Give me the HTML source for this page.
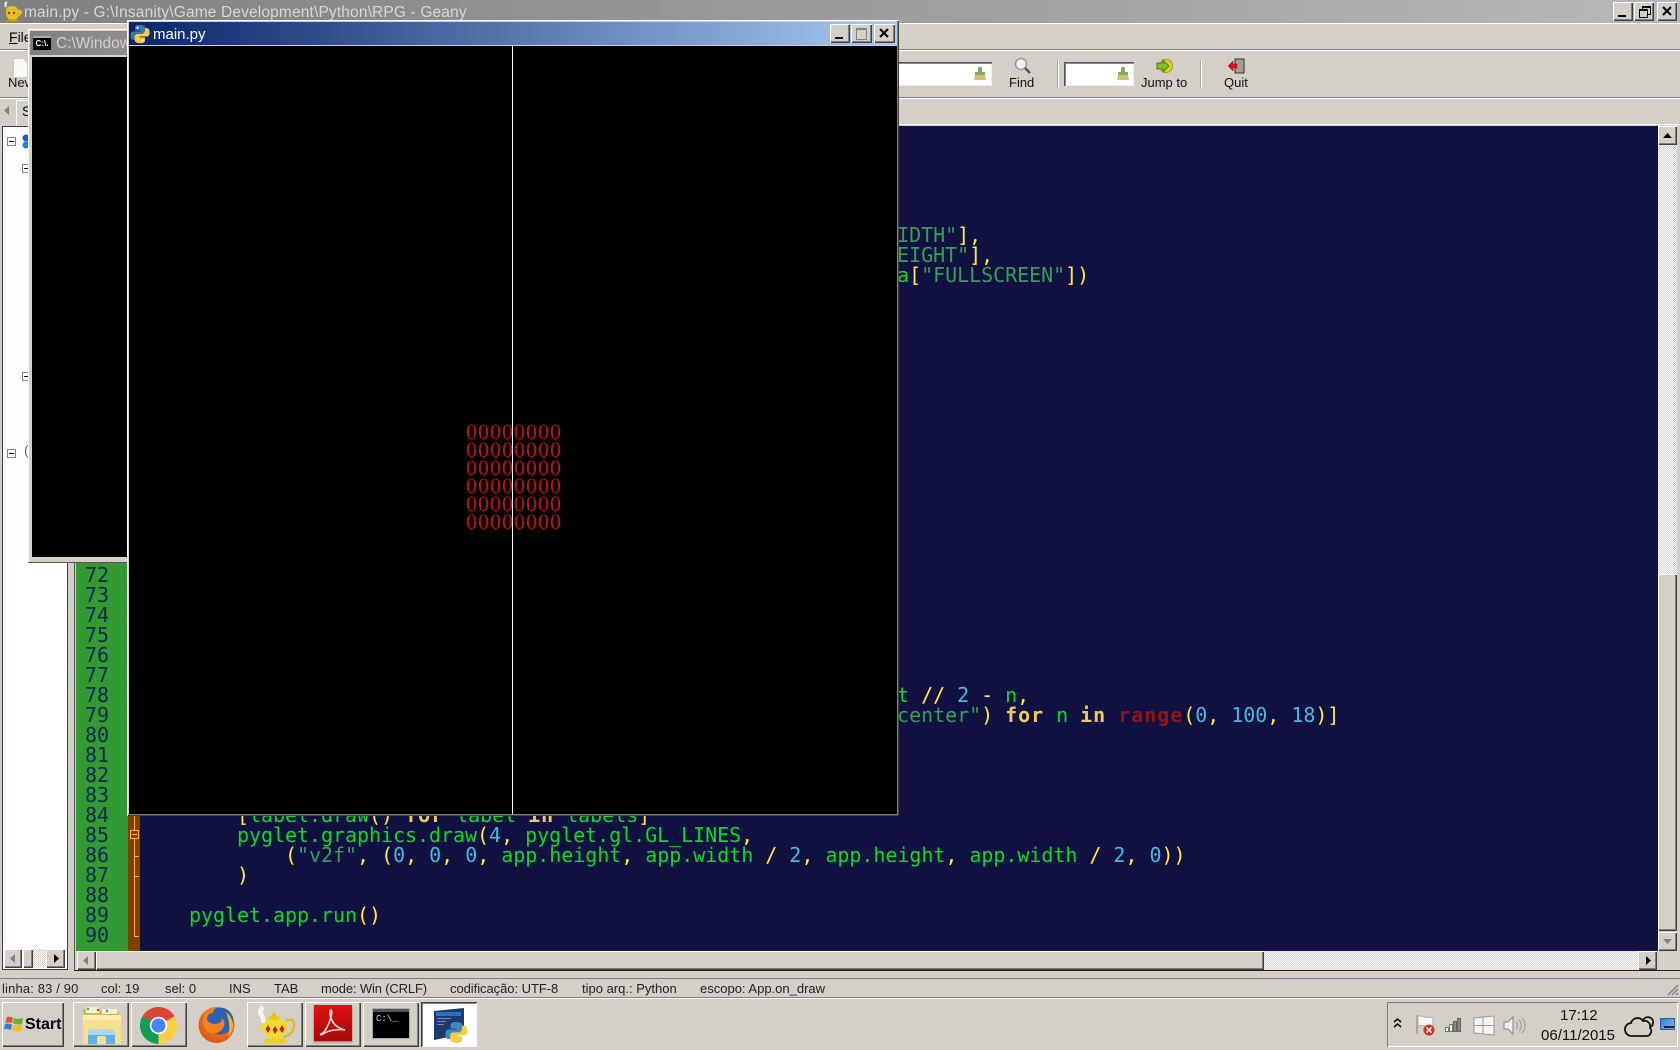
<!DOCTYPE html>
<html><head><meta charset="utf-8"><title>main.py - Geany</title>
<style>
html,body{margin:0;padding:0;width:1680px;height:1050px;overflow:hidden;background:#d4d0c8}
body{position:relative;font-family:"Liberation Sans",sans-serif;font-size:13px;color:#000}
div,svg,pre{position:absolute;margin:0}
.t{white-space:nowrap;line-height:1}
.r{background:#d4d0c8;box-shadow:inset 1px 1px #fff,inset -1px -1px #404040,inset -2px -2px #808080}
.bt{background:#d4d0c8;box-shadow:inset 1px 1px #fff,inset -1px -1px #404040,inset -2px -2px #808080}
.d{background:conic-gradient(#fff 25%,#d4d0c8 0 50%,#fff 0 75%,#d4d0c8 0) 0 0/2px 2px}
.c{font-family:"DejaVu Sans Mono",monospace;font-size:20px;line-height:20px;white-space:pre;left:141px;color:#00e020;letter-spacing:-.04px}
.c .y{color:#ffee44}.c .s{color:#35a055}.c .n{color:#44bbdd}.c .k{color:#eecc55;font-weight:bold;letter-spacing:.96px}.c .f{color:#991111;font-weight:bold;letter-spacing:.96px}
.ln{font-family:"DejaVu Sans Mono",monospace;font-size:20px;line-height:20px;color:#0f2a50;left:77px;width:32px;text-align:right;letter-spacing:-.04px}
.z{font-family:"Liberation Serif",serif;font-size:22px;line-height:18px;color:#c41010;left:466px;letter-spacing:1px;white-space:nowrap}
.st{top:981px;color:#222;white-space:nowrap;line-height:15px;font-size:13px}
.tb{top:75px;color:#111;white-space:nowrap;line-height:15px;font-size:13px;text-align:center}
.exp{width:7px;height:7px;border:1px solid #808080;background:#fff}
.exp:after{content:"";position:absolute;left:1px;top:3px;width:5px;height:1px;background:#000}
</style></head><body>

<!-- Geany title bar -->
<div style="left:0;top:0;width:1680px;height:24px;background:linear-gradient(90deg,#7f7f7f,#b8b8b8)"></div>
<svg style="left:2px;top:1px" width="21" height="22" viewBox="0 0 21 22"><path d="M5 1c-2 1-2 3-1 5" stroke="#eee" stroke-width="2" fill="none"/><path d="M4 9c0-3 4-4 6-4s6 1 6 4c2-1 4 0 4 2 0 3-3 4-4 5-1 3-3 3-6 3s-6-2-6-8z" fill="#e6c020"/><ellipse cx="10" cy="20" rx="6" ry="1.5" fill="#c09010"/><circle cx="7" cy="12" r="1.2" fill="#c02020"/><circle cx="12" cy="12" r="1.2" fill="#c02020"/></svg>
<div class="t" style="left:24px;top:5px;font-size:15.5px;color:#d8d8d0;letter-spacing:.15px">main.py - G:\Insanity\Game Development\Python\RPG - Geany</div>
<div class="bt" style="left:1613px;top:2px;width:20px;height:19px"><div style="left:5px;top:13px;width:8px;height:2px;background:#000"></div></div>
<div class="bt" style="left:1634px;top:2px;width:20px;height:19px"><div style="left:8px;top:4px;width:7px;height:6px;border:1px solid #000;border-top-width:2px"></div><div style="left:5px;top:7px;width:7px;height:6px;border:1px solid #000;border-top-width:2px;background:#d4d0c8"></div></div>
<div class="bt" style="left:1657px;top:2px;width:20px;height:19px"><svg style="left:5px;top:4px" width="11" height="11"><path d="M1 1l8 8M9 1l-8 8" stroke="#000" stroke-width="2"/></svg></div>

<!-- Menu / toolbar -->
<div style="left:0;top:23px;width:1680px;height:1px;background:#fff"></div>
<div class="t" style="left:9px;top:30px;font-size:14px"><u>F</u>ile</div>
<div style="left:0;top:49px;width:1680px;height:1px;background:#808080"></div>
<div style="left:0;top:50px;width:1680px;height:1px;background:#fff"></div>
<svg style="left:13px;top:58px" width="15" height="20"><path d="M.5.5h10l4 4v15H.5z" fill="#fafaf6" stroke="#c8c8c0"/></svg>
<div class="tb" style="left:8px">New</div>
<div style="left:898px;top:62px;width:94px;height:24px;background:#fff;box-shadow:inset 0 1px #555,inset 0 2px #888,inset -1px -1px #eee"></div>
<svg style="left:973px;top:66px" width="14" height="15"><path d="M5 1h4v5h3v3H2V6h3z" fill="#86a860"/><path d="M2 9h10l1 5H1z" fill="#d0c070"/></svg>
<svg style="left:1013px;top:57px" width="20" height="19"><circle cx="8" cy="7" r="5.5" fill="#eef" stroke="#999" stroke-width="1.5"/><path d="M12 11l5 5" stroke="#555" stroke-width="2.5"/></svg>
<div class="tb" style="left:1009px">Find</div>
<div style="left:1057px;top:60px;width:1px;height:28px;background:#a8a8a0"></div><div style="left:1058px;top:60px;width:1px;height:28px;background:#fff"></div>
<div style="left:1064px;top:62px;width:70px;height:24px;background:#fff;box-shadow:inset 1px 1px #555,inset 2px 2px #888,inset -1px -1px #eee"></div>
<svg style="left:1116px;top:66px" width="14" height="15"><path d="M5 1h4v5h3v3H2V6h3z" fill="#86a860"/><path d="M2 9h10l1 5H1z" fill="#d0c070"/></svg>
<svg style="left:1156px;top:59px" width="18" height="14"><circle cx="10" cy="7" r="6.5" fill="#e8d020" stroke="#a89810"/><path d="M1 4h6V1l6 6-6 6v-3H1z" fill="#7cc030" stroke="#4c8010"/></svg>
<div class="tb" style="left:1141px">Jump to</div>
<div style="left:1200px;top:60px;width:1px;height:28px;background:#a8a8a0"></div><div style="left:1201px;top:60px;width:1px;height:28px;background:#fff"></div>
<svg style="left:1228px;top:58px" width="17" height="16"><rect x="7" y="1" width="9" height="14" fill="#a0a098" stroke="#333"/><path d="M0 8l5-5v3h4v4H5v3z" fill="#e01020" stroke="#901010" stroke-width=".5"/></svg>
<div class="tb" style="left:1224px">Quit</div>
<div style="left:0;top:97px;width:1680px;height:1px;background:#808080"></div>
<div style="left:0;top:98px;width:1680px;height:1px;background:#fff"></div>

<!-- Sidebar -->
<svg style="left:3px;top:105px" width="8" height="11"><path d="M6 1v9L1 5.5z" fill="#808080"/></svg>
<div style="left:16px;top:100px;width:60px;height:26px;background:#d4d0c8;box-shadow:inset 1px 1px #fff"></div>
<div class="t" style="left:22px;top:104px;font-size:14px">S</div>
<div style="left:2px;top:126px;width:66px;height:844px;background:#fff;border:1px solid #404040;box-sizing:border-box"></div>
<div class="exp" style="left:7px;top:137px"></div>
<svg style="left:22px;top:134px" width="8" height="15"><circle cx="4" cy="4" r="3.5" fill="#1060c0"/><circle cx="4" cy="11" r="3.5" fill="#2080e0"/></svg>
<div class="exp" style="left:22px;top:164px"></div>
<div class="exp" style="left:22px;top:372px"></div>
<div class="exp" style="left:7px;top:449px"></div>
<div class="t" style="left:24px;top:443px;font-size:14px;color:#666">(</div>
<div class="r" style="left:4px;top:949px;width:18px;height:19px"><svg style="left:5px;top:4px" width="8" height="11"><path d="M6 1v9L1 5.5z" fill="#808080"/></svg></div>
<div class="r" style="left:23px;top:949px;width:10px;height:19px"></div>
<div class="d" style="left:33px;top:949px;width:13px;height:19px"></div>
<div class="r" style="left:46px;top:949px;width:19px;height:19px"><svg style="left:7px;top:4px" width="8" height="11"><path d="M1 1v9L6 5.5z" fill="#000"/></svg></div>

<!-- Editor -->
<div style="left:74px;top:124px;width:1606px;height:847px;background:#d4d0c8;border-left:1px solid #555;border-top:1px solid #fff;border-bottom:1px solid #202020;box-sizing:border-box"></div>
<div style="left:76px;top:126px;width:1582px;height:825px;background:#111142;overflow:hidden"></div>
<div style="left:76px;top:126px;width:52px;height:825px;background:#339933"></div>
<div style="left:128px;top:126px;width:12px;height:825px;background:#804000"></div>
<div style="left:134px;top:815px;width:1px;height:122px;background:#ffb030"></div>
<div style="left:130px;top:830px;width:7px;height:7px;border:1px solid #ffb030;background:#804000"></div>
<div style="left:132px;top:834px;width:5px;height:1px;background:#ffb030"></div>
<div style="left:134px;top:856px;width:5px;height:1px;background:#ffb030"></div>
<div style="left:134px;top:876px;width:5px;height:1px;background:#ffb030"></div>
<div style="left:134px;top:936px;width:5px;height:1px;background:#ffb030"></div>

<div class="ln" style="top:565px">72</div><div class="ln" style="top:585px">73</div><div class="ln" style="top:605px">74</div><div class="ln" style="top:625px">75</div><div class="ln" style="top:645px">76</div><div class="ln" style="top:665px">77</div><div class="ln" style="top:685px">78</div><div class="ln" style="top:705px">79</div><div class="ln" style="top:725px">80</div><div class="ln" style="top:745px">81</div><div class="ln" style="top:765px">82</div><div class="ln" style="top:785px">83</div><div class="ln" style="top:805px">84</div><div class="ln" style="top:825px">85</div><div class="ln" style="top:845px">86</div><div class="ln" style="top:865px">87</div><div class="ln" style="top:885px">88</div><div class="ln" style="top:905px">89</div><div class="ln" style="top:925px">90</div>

<pre class="c" style="top:225px">                                                               <span class="s">IDTH"</span><span class="y">]</span><span class="y">,</span></pre>
<pre class="c" style="top:245px">                                                               <span class="s">EIGHT"</span><span class="y">]</span><span class="y">,</span></pre>
<pre class="c" style="top:265px">                                                               a<span class="y">[</span><span class="s">"FULLSCREEN"</span><span class="y">])</span></pre>
<pre class="c" style="top:685px">                                                               t <span class="y">//</span> <span class="n">2</span> <span class="y">-</span> n<span class="y">,</span></pre>
<pre class="c" style="top:705px">                                                               <span class="s">center"</span><span class="y">)</span> <span class="k">for</span> n <span class="k">in</span> <span class="f">range</span><span class="y">(</span><span class="n">0</span><span class="y">,</span> <span class="n">100</span><span class="y">,</span> <span class="n">18</span><span class="y">)]</span></pre>
<pre class="c" style="top:805px">        <span class="y">[</span>label.draw<span class="y">()</span> <span class="k">for</span> label <span class="k">in</span> labels<span class="y">]</span></pre>
<pre class="c" style="top:825px">        pyglet.graphics.draw<span class="y">(</span><span class="n">4</span><span class="y">,</span> pyglet.gl.GL_LINES<span class="y">,</span></pre>
<pre class="c" style="top:845px">            <span class="y">(</span><span class="s">"v2f"</span><span class="y">,</span> <span class="y">(</span><span class="n">0</span><span class="y">,</span> <span class="n">0</span><span class="y">,</span> <span class="n">0</span><span class="y">,</span> app.height<span class="y">,</span> app.width <span class="y">/</span> <span class="n">2</span><span class="y">,</span> app.height<span class="y">,</span> app.width <span class="y">/</span> <span class="n">2</span><span class="y">,</span> <span class="n">0</span><span class="y">))</span></pre>
<pre class="c" style="top:865px">        <span class="y">)</span></pre>
<pre class="c" style="top:905px">    pyglet.app.run<span class="y">()</span></pre>

<!-- Editor scrollbars -->
<div class="r" style="left:77px;top:951px;width:19px;height:19px"><svg style="left:5px;top:4px" width="8" height="11"><path d="M6 1v9L1 5.5z" fill="#808080"/></svg></div>
<div class="r" style="left:96px;top:951px;width:1168px;height:19px"></div>
<div class="d" style="left:1264px;top:951px;width:374px;height:19px"></div>
<div class="r" style="left:1638px;top:951px;width:19px;height:19px"><svg style="left:7px;top:4px" width="8" height="11"><path d="M1 1v9L6 5.5z" fill="#000"/></svg></div>
<div class="r" style="left:1658px;top:126px;width:19px;height:19px"><svg style="left:4px;top:6px" width="11" height="7"><path d="M5.500 1L10 6H1z" fill="#000"/></svg></div>
<div class="d" style="left:1658px;top:145px;width:19px;height:429px"></div>
<div class="r" style="left:1658px;top:574px;width:19px;height:357px"></div>
<div class="r" style="left:1658px;top:932px;width:19px;height:19px"><svg style="left:4px;top:6px" width="11" height="7"><path d="M1 1h9L5.500 6z" fill="#808080"/></svg></div>

<!-- Console window -->
<div style="left:28px;top:29px;width:100px;height:534px;background:#d4d0c8;border-bottom:1px solid #555;box-sizing:border-box;box-shadow:inset 1px 1px #fff"></div>
<div style="left:30px;top:31px;width:98px;height:24px;background:linear-gradient(90deg,#808080,#8e8e8e)"></div>
<div style="left:33px;top:36px;width:18px;height:14px;background:#000;border-top:2px solid #aaa;box-sizing:border-box;color:#fff;font:bold 8px/11px 'Liberation Sans',sans-serif;text-align:center">C:\.</div>
<div class="t" style="left:56px;top:36px;font-size:15.500px;color:#d4d0c8;width:72px;overflow:hidden">C:\Windows</div>
<div style="left:32px;top:57px;width:96px;height:500px;background:#000"></div>

<!-- main.py window -->
<div style="left:127px;top:20px;width:772px;height:796px;background:#d4d0c8;box-shadow:inset 1px 1px #fff,inset -1px -1px #404040,inset -2px -2px #808080"></div>
<div style="left:129px;top:22px;width:768px;height:23px;background:linear-gradient(90deg,#0a246a,#a6caf0)"></div>
<svg style="left:130px;top:24px" width="20" height="20" viewBox="0 0 24 24"><path d="M12 1C6 1 6 3 6 5v3h6.500v1H4C1.500 9 .5 11 .5 14s1 5 3.500 5h2v-3c0-2 2-4 4-4h5c2 0 3.500-1.500 3.500-3.500V5c0-2-2-4-6.500-4z" fill="#3a76a8"/><circle cx="9" cy="4.500" r="1.300" fill="#fff"/><path d="M12 23c6 0 6-2 6-4v-3h-6.500v-1H20c2.500 0 3.500-2 3.500-5s-1-5-3.500-5h-2v3c0 2-2 4-4 4H9c-2 0-3.500 1.500-3.500 3.500V19c0 2 2 4 6.500 4z" fill="#f8cc40"/><circle cx="15" cy="19.500" r="1.300" fill="#fff"/></svg>
<div class="t" style="left:153px;top:27px;font-size:15px;color:#fff">main.py</div>
<div class="bt" style="left:830px;top:24px;width:20px;height:19px"><div style="left:5px;top:13px;width:8px;height:2px;background:#000"></div></div>
<div class="bt" style="left:851px;top:24px;width:21px;height:19px"><div style="left:5px;top:4px;width:9px;height:9px;border:1px solid #808080;border-top-width:2px"></div></div>
<div class="bt" style="left:874px;top:24px;width:21px;height:19px"><svg style="left:5px;top:4px" width="11" height="11"><path d="M1 1l8 8M9 1l-8 8" stroke="#000" stroke-width="2"/></svg></div>
<div style="left:129px;top:46px;width:768px;height:768px;background:#000"></div>
<div style="left:512px;top:46px;width:1px;height:768px;background:#fff"></div>
<div class="z" style="top:423px">00000000</div>
<div class="z" style="top:441px">00000000</div>
<div class="z" style="top:459px">00000000</div>
<div class="z" style="top:477px">00000000</div>
<div class="z" style="top:495px">00000000</div>
<div class="z" style="top:513px">00000000</div>

<!-- Status bar -->
<div style="left:0;top:978px;width:1680px;height:1px;background:#808080"></div>
<div class="st" style="left:2px;letter-spacing:.15px">linha: 83 / 90</div>
<div class="st" style="left:101px">col: 19</div>
<div class="st" style="left:165px">sel: 0</div>
<div class="st" style="left:229px">INS</div>
<div class="st" style="left:274px">TAB</div>
<div class="st" style="left:321px;letter-spacing:-.15px">mode: Win (CRLF)</div>
<div class="st" style="left:450px;letter-spacing:-.05px">codificação: UTF-8</div>
<div class="st" style="left:582px">tipo arq.: Python</div>
<div class="st" style="left:700px">escopo: App.on_draw</div>
<svg style="left:1667px;top:984px" width="12" height="12"><path d="M11 1L1 11M11 5l-6 6M11 9l-2 2" stroke="#808080" stroke-width="1.500"/></svg>
<div style="left:0;top:997px;width:1680px;height:1px;background:#808080"></div>
<div style="left:0;top:998px;width:1680px;height:1px;background:#fff"></div>

<!-- Taskbar -->
<div class="r" style="left:2px;top:1002px;width:62px;height:45px"></div>
<svg style="left:4px;top:1015px" width="20" height="18" viewBox="0 0 20 18"><path d="M3 2c2-1 3 0 6 .500L8 8C5 7.500 4 7 1 8z" fill="#e05030"/><path d="M10 3c3 1 5 1 9 0l-1 6c-3 1-6 0-9-.500z" fill="#70b030"/><path d="M1 9c3-1 4-.500 7 .500L7 15c-3-1-4-1.500-7-.500z" fill="#3080d0"/><path d="M9 10c3 .500 5 1 9 0l-1 6c-3 1-6 .500-9-.500z" fill="#f0c020"/></svg>
<div class="t" style="left:25px;top:1017px;font-size:16px;font-weight:bold">Start</div>

<!-- Explorer -->
<div class="r" style="left:73px;top:1002px;width:56px;height:45px"></div>
<svg style="left:82px;top:1006px" width="39" height="38" viewBox="0 0 39 38"><path d="M1 3h17l2 3h17v31H1z" fill="#d8b850"/><rect x="4" y="1" width="13" height="6" fill="#f4f0d0"/><rect x="20" y="3" width="15" height="5" fill="#f4f0d0"/><circle cx="6" cy="3" r="1.200" fill="#60a040"/><circle cx="16" cy="4" r="1.200" fill="#d04030"/><circle cx="25" cy="5" r="1.200" fill="#4080c0"/><path d="M1 9h38v29H1z" fill="#f6e090"/><path d="M1 9h38v5H1z" fill="#fbeeb0"/><path d="M6 38V27c0-2 1-4 4-4h19c3 0 4 2 4 4v11h-9v-6c0-1-1-2-2-2h-5c-1 0-2 1-2 2v6z" fill="#60b0e4"/><path d="M6 27c0-2 1-4 4-4h19c3 0 4 2 4 4v2H6z" fill="#a8daf8"/></svg>

<!-- Chrome -->
<div class="r" style="left:131px;top:1002px;width:56px;height:45px"></div>
<svg style="left:140px;top:1007px" width="37" height="37" viewBox="0 0 36 36"><path d="M18 18L2.400 9A18 18 0 0 1 33.600 9z" fill="#db4437"/><path d="M18 18L33.600 9A18 18 0 0 1 18 36z" fill="#ffcd40"/><path d="M18 18L18 36A18 18 0 0 1 2.400 9z" fill="#0f9d58"/><path d="M18 18h16v-4H18z" fill="#ffcd40"/><circle cx="18" cy="18" r="8.500" fill="#fff"/><circle cx="18" cy="18" r="6.800" fill="#4285f4"/></svg>

<!-- Firefox -->
<svg style="left:198px;top:1006px" width="37" height="38" viewBox="0 0 37 38"><defs><radialGradient id="ff" cx=".6" cy=".3" r=".8"><stop offset="0" stop-color="#f8a020"/><stop offset="1" stop-color="#d84a18"/></radialGradient></defs><circle cx="18.500" cy="19" r="18" fill="url(#ff)"/><circle cx="22" cy="15" r="13.500" fill="#2a62b0"/><path d="M9 5c3-3 7-4 11-4-4 2-5 4-5 6-4 0-6 3-6 6 1 3 4 5 8 5 5 0 7-3 7-6 3 3 3 7 1 10-2 4-7 6-11 5C8 26 5 20 5 14c0-3 2-7 4-9z" fill="#f08020"/><path d="M28 6c4 3 7 8 7 13s-2 9-5 12c2-6 2-15-2-25z" fill="#f8b028"/></svg>

<!-- Teapot -->
<div class="r" style="left:247px;top:1002px;width:56px;height:45px"></div>
<svg style="left:255px;top:1005px" width="41" height="40" viewBox="0 0 41 40"><path d="M8 2c-2 2-4 4-2 7 1 3 3 4 2 9" stroke="#f4f4f4" stroke-width="4.500" fill="none"/><path d="M31 16c5-3 8-1 8 4 0 7-5 11-11 12" stroke="#e0c020" stroke-width="2.500" fill="none"/><path d="M5 19c4 0 5-3 9-4 6-2 15-1 18 3 1 7-3 15-12 15-8 0-13-6-15-14z" fill="#f2dc30"/><ellipse cx="19" cy="13" rx="6" ry="2.500" fill="#e8cc18"/><circle cx="19" cy="10" r="2" fill="#e0c010"/><ellipse cx="20" cy="36" rx="12" ry="3" fill="#eed020"/><path d="M13 20l2.500 4-2.500 4-2.500-4zM20 21l2.500 4-2.500 4-2.500-4zM27 20l2.500 4-2.500 4-2.500-4z" fill="#c02020"/></svg>

<!-- Acrobat -->
<div class="r" style="left:305px;top:1002px;width:56px;height:45px"></div>
<div style="left:314px;top:1005px;width:38px;height:36px;background:linear-gradient(#e01010,#a80808);box-shadow:0 1px 2px #777"></div>
<svg style="left:314px;top:1005px" width="38" height="36"><path d="M7 29c4-1 8-10 10-17 1-4 1-7 0-7s-2 3 0 8c2 6 6 10 14 12-7-1-16 0-22 4-2 1-3 1-2 0z" stroke="#f8e0e0" stroke-width="1.600" fill="none"/></svg>

<!-- cmd -->
<div class="r" style="left:363px;top:1002px;width:56px;height:45px"></div>
<div style="left:373px;top:1009px;width:36px;height:29px;background:#000;border-top:3px solid #555;box-sizing:border-box;box-shadow:0 0 0 1px #aaa"></div>
<div class="t" style="left:376px;top:1014px;font:9px 'Liberation Mono',monospace;color:#ddd">C:\_</div>

<!-- Python IDLE -->
<div style="left:421px;top:1002px;width:56px;height:45px;background:#fff;box-shadow:inset 1px 1px #404040,inset -1px -1px #fff,inset 2px 2px #808080"></div>
<svg style="left:432px;top:1007px" width="36" height="37" viewBox="0 0 36 37"><path d="M2 4l30-3v26L2 33z" fill="#1c3a70"/><path d="M4 5h25v4H4z" fill="#3070c0"/><g fill="#7a8ea8"><rect x="5" y="11" width="14" height="1"/><rect x="5" y="14" width="9" height="1"/><rect x="5" y="17" width="7" height="1"/></g><g transform="translate(13 14) scale(.95)"><path d="M12 1C6 1 6 3 6 5v3h6.500v1H4C1.500 9 .5 11 .5 14s1 5 3.500 5h2v-3c0-2 2-4 4-4h5c2 0 3.500-1.500 3.500-3.500V5c0-2-2-4-6.500-4z" fill="#4088c0"/><path d="M12 23c6 0 6-2 6-4v-3h-6.500v-1H20c2.500 0 3.500-2 3.500-5s-1-5-3.500-5h-2v3c0 2-2 4-4 4H9c-2 0-3.500 1.500-3.500 3.500V19c0 2 2 4 6.500 4z" fill="#f8cc40"/></g></svg>

<!-- Tray -->
<div style="left:1387px;top:1002px;width:291px;height:45px;box-shadow:inset 1px 1px #808080,inset -1px -1px #fff"></div>
<svg style="left:1393px;top:1018px" width="9" height="10"><path d="M1 4l3.500-3L8 4M1 9l3.500-3L8 9" stroke="#000" stroke-width="1.500" fill="none"/></svg>
<svg style="left:1415px;top:1014px" width="22" height="23"><path d="M2 1v19" stroke="#aaa" stroke-width="2"/><path d="M3 2c5-1 7 3 15 1v9c-6 2-10-2-15 0z" fill="#f4f4f0" stroke="#b0b0a8"/><circle cx="14" cy="16" r="5.500" fill="#d83020"/><path d="M11.500 13.500l5 5M16.500 13.500l-5 5" stroke="#fff" stroke-width="1.500"/></svg>
<svg style="left:1445px;top:1017px" width="18" height="16"><g fill="#f0f0ea" stroke="#777"><rect x=".5" y="10.500" width="3" height="4"/><rect x="4.500" y="7.500" width="3" height="7"/></g><g fill="#8a8a82" stroke="#666"><rect x="8.500" y="4.500" width="3" height="10"/><rect x="12.500" y="1.500" width="3" height="13"/></g></svg>
<svg style="left:1473px;top:1015px" width="22" height="21"><path d="M1 3l20-2v19L1 18z" fill="#f4f4f0" stroke="#999"/><path d="M1 10.500h20M10 2v17" stroke="#999"/></svg>
<svg style="left:1503px;top:1015px" width="23" height="21"><path d="M1 7h4l5-5v17l-5-5H1z" fill="#eeeeea" stroke="#888"/><path d="M13 7c2 2 2 5 0 7M16 5c3 3 3 8 0 11M19 3c4 4 4 11 0 15" stroke="#999" fill="none"/></svg>
<div class="t" style="left:1560px;top:1008px;font-size:15px;width:34px;text-align:center;color:#111">17:12</div>
<div class="t" style="left:1541px;top:1028px;font-size:15px;width:74px;text-align:center;color:#111;white-space:nowrap">06/11/2015</div>
<svg style="left:1624px;top:1014px" width="32" height="23"><path d="M8 22a6.500 6.500 0 0 1-1-13c1-5 9-7 12-2 4-1 8 2 7 7 2 1 2 7-3 8z" fill="none" stroke="#111" stroke-width="1.800"/><path d="M19 6c3-5 11-3 10 3 0 2-1 3-2 4" fill="none" stroke="#111" stroke-width="1.800"/></svg>
<div style="left:1660px;top:1018px;width:15px;height:12px;background:linear-gradient(135deg,#3080d0,#80b8e8);border:1px solid #306090;box-sizing:border-box"></div>
<div style="left:1664px;top:1026px;width:10px;height:2px;background:#102040"></div>
</body></html>
